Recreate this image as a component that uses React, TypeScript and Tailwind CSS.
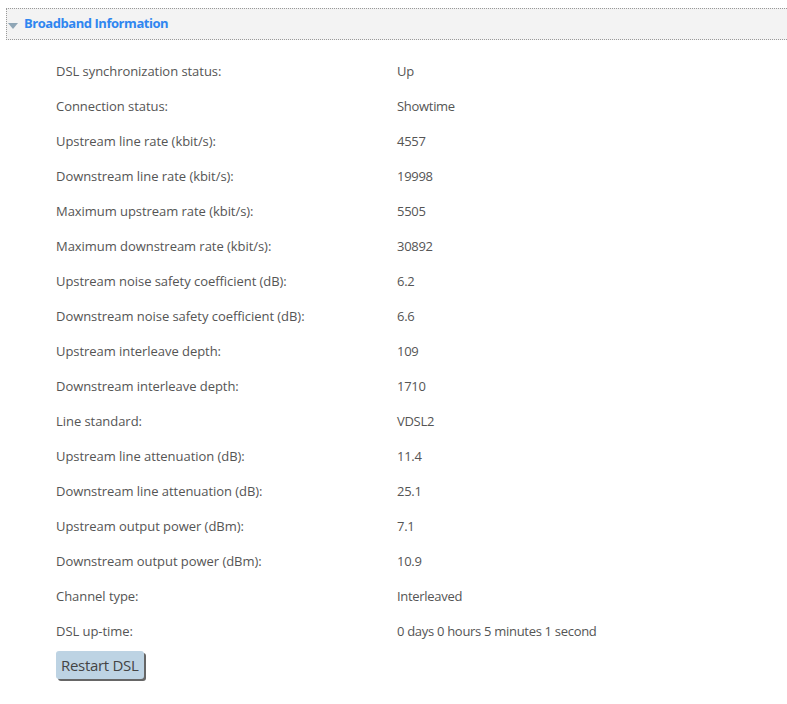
const rows: [string, string][] = [
  ["DSL synchronization status:", "Up"],
  ["Connection status:", "Showtime"],
  ["Upstream line rate (kbit/s):", "4557"],
  ["Downstream line rate (kbit/s):", "19998"],
  ["Maximum upstream rate (kbit/s):", "5505"],
  ["Maximum downstream rate (kbit/s):", "30892"],
  ["Upstream noise safety coefficient (dB):", "6.2"],
  ["Downstream noise safety coefficient (dB):", "6.6"],
  ["Upstream interleave depth:", "109"],
  ["Downstream interleave depth:", "1710"],
  ["Line standard:", "VDSL2"],
  ["Upstream line attenuation (dB):", "11.4"],
  ["Downstream line attenuation (dB):", "25.1"],
  ["Upstream output power (dBm):", "7.1"],
  ["Downstream output power (dBm):", "10.9"],
  ["Channel type:", "Interleaved"],
  ["DSL up-time:", "0 days 0 hours 5 minutes 1 second"],
];

export default function App() {
  return (
    <div className="w-full min-h-screen bg-white pt-2 pl-[6px] font-['Open_Sans',sans-serif] text-[13px] text-[#555]">
      {/* section header */}
      <div className="flex items-center h-[32px] bg-[#f3f3f3] border border-dotted border-[#999] border-r-0">
        <svg width="10" height="6" viewBox="0 0 10 6" className="mt-[4px] ml-[1px] mr-[6px]">
          <polygon points="0,0 10,0 5,6" fill="#8fa6b6" />
        </svg>
        <span className="text-[13px] font-bold text-[#2f86f0] tracking-[-0.45px]">Broadband Information</span>
      </div>

      <div className="pl-[50px] pt-[22px]">
        {rows.map(([label, value]) => (
          <div key={label} className="flex h-[35px] items-start">
            <div className="w-[341px] tracking-[-0.05px]">{label}</div>
            <div className="tracking-[-0.3px]">{value}</div>
          </div>
        ))}
        <button className="mt-[-10px] h-[28px] px-[5px] rounded-[3px] bg-[#bdd3e3] text-[#444] text-[15px] tracking-[-0.3px] shadow-[2px_2px_0_#666]">
          Restart DSL
        </button>
      </div>
    </div>
  );
}
